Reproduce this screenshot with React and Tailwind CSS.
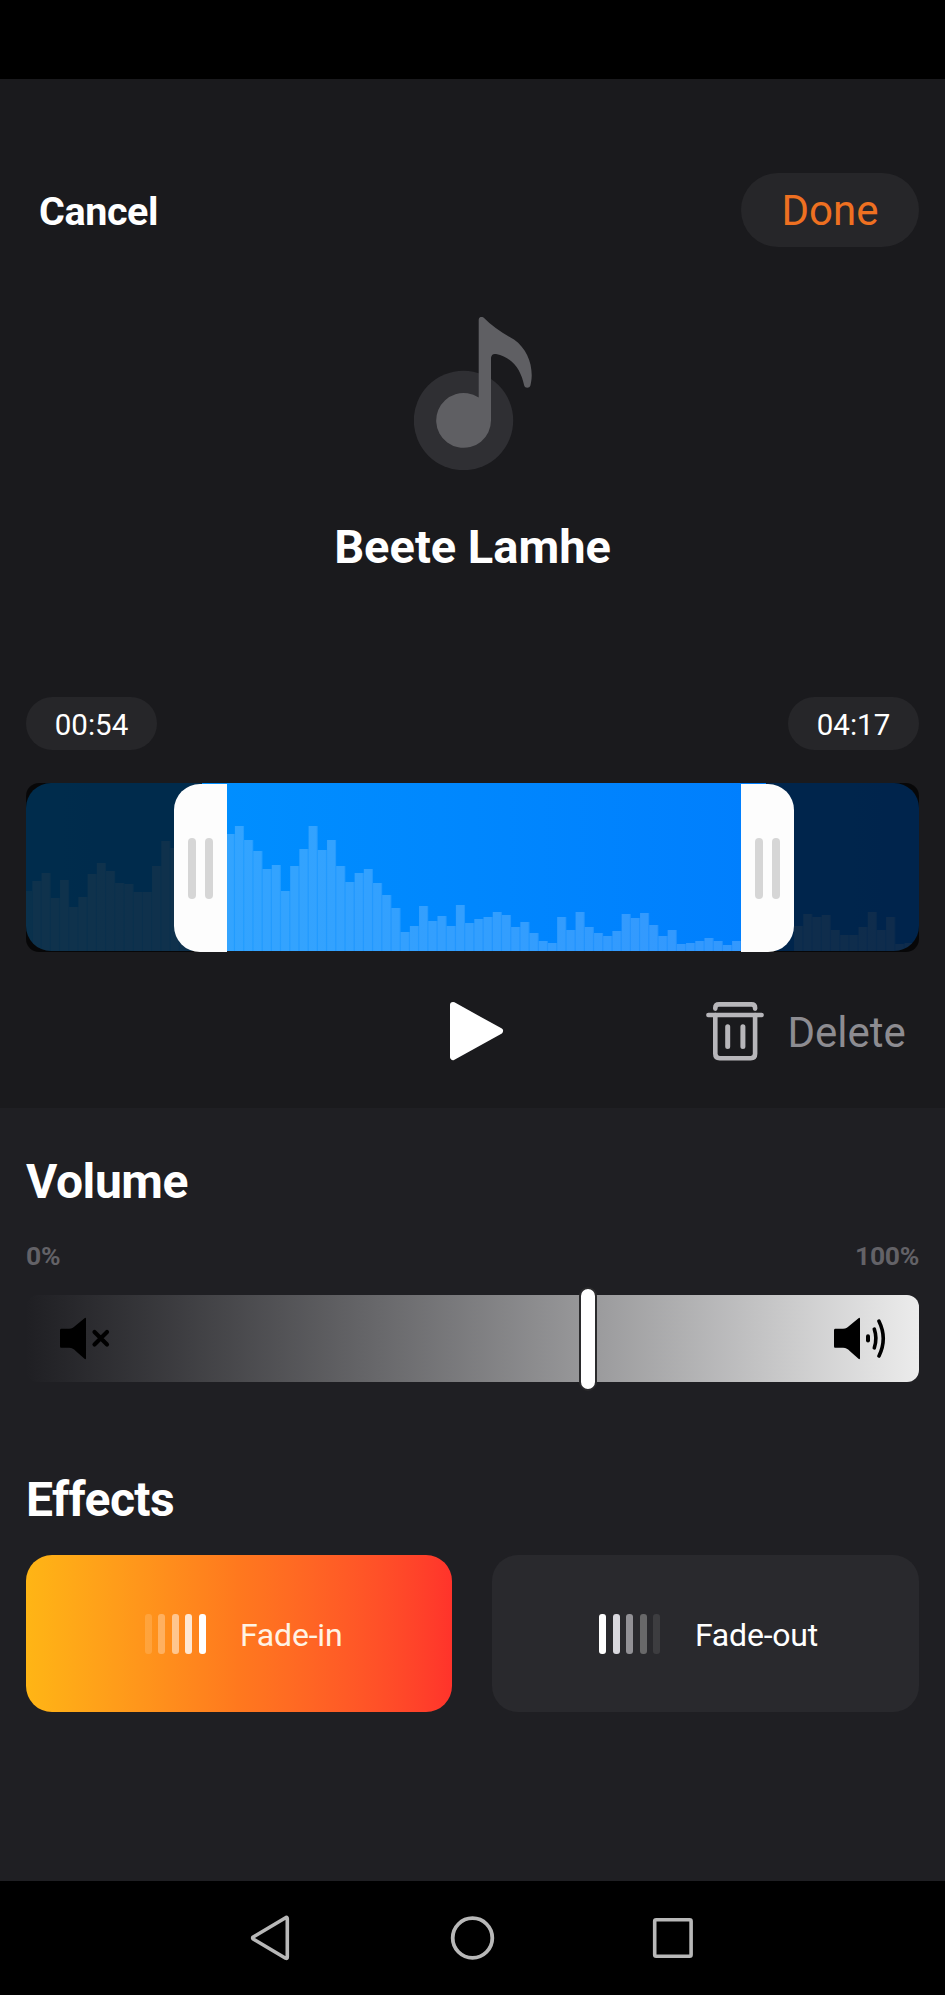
const LEFT_BARS = [
  70, 78, 53, 71, 44, 54, 77, 88, 80, 68, 67, 59, 59, 85, 110, 103, 90, 95, 100, 110, 112,
  117, 125, 111, 100, 82, 86, 60, 85, 102, 125, 101, 111, 85, 69, 78, 82, 68, 56, 43, 19,
  25, 45, 30, 35, 25, 46, 28, 32, 34, 39, 36, 24, 29, 18, 10, 8, 34, 21, 39, 24,
  18, 15, 20, 37, 33, 38, 26, 15, 21, 7, 8, 10, 13, 10, 6, 10, 14,
];
const RIGHT_BARS = [25, 37, 34, 36, 21, 16, 16, 24, 39, 21, 34, 7, 8, 10];
const PITCH = 9.207;

function Waveform() {
  return (
    <svg className="absolute inset-0 h-full w-full rounded-[25px]" viewBox="0 0 893 168" preserveAspectRatio="none">
      <defs>
        <linearGradient id="wave" x1="0" x2="1" y1="0" y2="0">
          <stop offset="0" stopColor="#0094ff" />
          <stop offset="1" stopColor="#007afd" />
        </linearGradient>
      </defs>
      <rect width="893" height="168" fill="url(#wave)" />
      <g fill="#fff">
        <rect x="0" width="6" y="108" height="60" fillOpacity="0.14" />
        {LEFT_BARS.map((h, i) => (
          <g key={i}>
            <rect x={6.3 + PITCH * i} y={168 - h} width={PITCH} height={h} fillOpacity="0.14" />
            <rect x={6.5 + PITCH * i} y={168 - h} width="8" height={h} fillOpacity="0.07" />
          </g>
        ))}
        {RIGHT_BARS.map((h, i) => (
          <g key={i}>
            <rect x={768 + PITCH * i} y={168 - h} width={PITCH} height={h} fillOpacity="0.14" />
            <rect x={768.2 + PITCH * i} y={168 - h} width="8" height={h} fillOpacity="0.07" />
          </g>
        ))}
      </g>
    </svg>
  );
}

function Grip({ side }) {
  return (
    <div
      className={
        "relative z-10 mt-px flex h-[168px] w-[53px] items-center gap-[9.5px] bg-[#fdfdfd] pl-[13.5px] " +
        (side === "left" ? "rounded-l-[26px]" : "rounded-r-[26px]")
      }
    >
      <span className="h-[61px] w-[8px] rounded-full bg-[#d6d6d6]" />
      <span className="h-[61px] w-[8px] rounded-full bg-[#d6d6d6]" />
    </div>
  );
}

function NoteIcon() {
  return (
    <svg className="h-[153px] w-[118px]" viewBox="414 317 118 153">
      <circle cx="463.5" cy="420.5" r="49.7" fill="#2f2f33" />
      <path
        fill="#5f5f63"
        d="M478.7 320 C478.7 317 481.5 316 483.5 317.6 C492 326 502 333 514 339.5 C526 348 532 362 531.7 376 C531.6 380 531 383 530.4 385.6 C529.5 388.6 525 388.6 524.2 385.6 C521 371 514 358 496 354 C493 353.4 491.2 355 491 358 L491 420.5 A27.4 27.4 0 1 1 478.7 397.6 Z"
      />
    </svg>
  );
}

function Speaker({ muted }) {
  return (
    <svg className="h-[44px] w-[54px]" viewBox="0 0 54 44">
      <path
        d="M2 11.8 H10 C13 11.8 15 10 17 8.2 L25.5 1.2 Q27 0 27 2 V41 Q27 43 25.5 41.8 L17 34.2 C15 32.4 13 30.8 10 30.8 H2 Q1 30.8 1 29.3 V13.3 Q1 11.8 2 11.8 Z"
        fill="#000"
      />
      {muted ? (
        <path d="M35.5 15 L48 27.5 M48 15 L35.5 27.5" stroke="#000" strokeWidth="4.2" strokeLinecap="round" />
      ) : (
        <g fill="none" stroke="#000" strokeLinecap="round">
          <path d="M35 19.2 V23.6" strokeWidth="4" />
          <path d="M41.3 12.2 Q44.5 21.5 41.3 30.8" strokeWidth="3.6" />
          <path d="M46 4.2 Q54.5 21.5 46 39" strokeWidth="3.6" />
        </g>
      )}
    </svg>
  );
}

function FadeBars({ colors }) {
  return (
    <div className="flex h-[40px] gap-[6.6px]">
      {colors.map((c, i) => (
        <span key={i} className={"w-[7px] rounded-[3px] " + c} />
      ))}
    </div>
  );
}

export default function App() {
  return (
    <div className="flex h-[1995px] w-[945px] flex-col bg-black font-['Roboto',sans-serif] text-white">
      <div className="h-[79px]" />

      <section className="flex h-[1029px] flex-col bg-[#1a1a1d] px-[26px] pt-[94px]">
        <header className="flex h-[74px] items-center justify-between">
          <button className="pl-[13px] pt-[4px] text-[39.5px] leading-none font-bold tracking-[-0.4px]">Cancel</button>
          <button className="flex h-[74px] w-[178px] items-center justify-center rounded-full bg-[#262629] pt-[2px] text-[42px] leading-none text-[#ee7021]">
            Done
          </button>
        </header>

        <div className="mt-[70px] flex flex-col items-center">
          <NoteIcon />
          <h1 className="mt-[53px] text-[47px] leading-[48px] font-bold">Beete Lamhe</h1>
        </div>

        <div className="mt-[126px] flex justify-between text-[29.5px]">
          <span className="flex h-[53px] w-[131px] items-center justify-center rounded-full bg-[#262629] pt-[4px]">00:54</span>
          <span className="flex h-[53px] w-[131px] items-center justify-center rounded-full bg-[#262629] pt-[4px]">04:17</span>
        </div>

        <div className="relative mt-[33px] flex h-[168px]">
          <Waveform />
          <div className="relative flex w-full">
            <div className="-mr-[28px] h-[169px] w-[176px] rounded-l-[13px] bg-black/70" />
            <Grip side="left" />
            <div className="flex-1" />
            <Grip side="right" />
            <div className="-ml-[28px] h-[169px] w-[153px] rounded-r-[13px] bg-black/70" />
          </div>
        </div>

        <div className="mt-[50px] flex h-[60px] items-center">
          <svg className="ml-[423px] h-[60px] w-[56px]" viewBox="0 0 56 60">
            <path d="M4 4 L51 30 L4 56 Z" fill="#fff" stroke="#fff" strokeWidth="6" strokeLinejoin="round" />
          </svg>
          <button className="ml-[201px] flex items-center">
            <svg
              className="h-[60px] w-[58px]"
              viewBox="0 0 58 60"
              fill="none"
              stroke="#b7b6ba"
              strokeWidth="4.6"
              strokeLinecap="round"
            >
              <path d="M9.3 7.6 V7 Q9.3 3.4 13 3.4 H45.4 Q49.1 3.4 49.1 7 V7.6" />
              <path d="M2.4 14 H55.6" />
              <path d="M9.3 14 V52.8 Q9.3 57.2 13.7 57.2 H44.7 Q49.1 57.2 49.1 52.8 V14" />
              <path d="M21.7 25.8 V45.6 M36.9 25.8 V45.6" strokeWidth="5" />
            </svg>
            <span className="ml-[23.5px] pt-[3px] text-[42px] leading-none text-[#8d8c91]">Delete</span>
          </button>
        </div>
      </section>

      <section className="flex h-[773px] flex-col bg-[#1f1f23] px-[26px] pt-[50px]">
        <h2 className="text-[48px] leading-[48px] font-bold tracking-[-0.4px]">Volume</h2>
        <div className="mt-[36px] flex justify-between text-[26.5px] leading-[28px] font-bold tracking-[-0.3px] text-[#636267]">
          <span>0%</span>
          <span>100%</span>
        </div>

        <div className="relative mt-[25px] flex h-[87px] items-center justify-between rounded-[12px] bg-linear-to-r from-[#1f1f23] to-[#ececec] pr-[32px] pl-[33px]">
          <Speaker muted />
          <Speaker />
          <div className="absolute top-[-8px] left-[552.5px] h-[104px] w-[18px] rounded-full border-2 border-[#2a2a2c] bg-white" />
        </div>

        <h2 className="mt-[94px] text-[48px] leading-[48px] font-bold tracking-[-0.6px]">Effects</h2>
        <div className="mt-[31px] flex justify-between text-[32px] tracking-[-0.2px]">
          <button className="flex h-[157px] w-[426px] items-center rounded-[26px] bg-linear-to-r from-[#ffb515] via-[#ff781e] to-[#ff332b] pl-[118.5px]">
            <FadeBars colors={["bg-white/15", "bg-white/30", "bg-white/50", "bg-white/80", "bg-white"]} />
            <span className="ml-[34px] pt-[2px] text-[#fff3e4]">Fade-in</span>
          </button>
          <button className="flex h-[157px] w-[427px] items-center rounded-[26px] bg-[#29292d] pl-[107px]">
            <FadeBars colors={["bg-white", "bg-[#d9d8de]", "bg-[#929196]", "bg-[#686869]", "bg-[#3d3d40]"]} />
            <span className="ml-[34.5px] pt-[2px]">Fade-out</span>
          </button>
        </div>
      </section>

      <nav className="flex h-[114px] items-center pb-px">
        <svg className="ml-[250px] h-[46px] w-[40px]" viewBox="0 0 40 46" fill="none" stroke="#b8b8b8" strokeWidth="3.6" strokeLinejoin="round">
          <path d="M36 2.5 Q37.3 2 37.3 4 V42 Q37.3 44 35.6 43.2 L3.2 24 Q2 23 3.2 22 Z" />
        </svg>
        <svg className="ml-[160px] h-[46px] w-[46px]" viewBox="0 0 46 46" fill="none" stroke="#b8b8b8" strokeWidth="3.8">
          <circle cx="22.5" cy="23" r="19.8" />
        </svg>
        <svg className="ml-[156px] h-[42px] w-[42px]" viewBox="0 0 42 42" fill="none" stroke="#b8b8b8" strokeWidth="3.6">
          <rect x="2.7" y="2.7" width="36.4" height="36.6" rx="1.5" />
        </svg>
      </nav>
    </div>
  );
}
